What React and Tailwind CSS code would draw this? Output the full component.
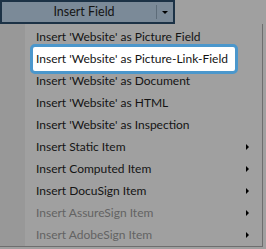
import React from 'react';

const items = [
  { label: "Insert 'Website' as Picture Field" },
  { label: "Insert 'Website' as Picture-Link-Field", active: true },
  { label: "Insert 'Website' as Document" },
  { label: "Insert 'Website' as HTML" },
  { label: "Insert 'Website' as Inspection" },
  { label: 'Insert Static Item', sub: true },
  { label: 'Insert Computed Item', sub: true },
  { label: 'Insert DocuSign Item', sub: true },
  { label: 'Insert AssureSign Item', sub: true, disabled: true },
  { label: 'Insert AdobeSign Item', sub: true, disabled: true },
];

export default function App() {
  return (
    <div className="w-[266px] h-[249px] bg-[#a0a0a0] overflow-hidden font-['Lato',sans-serif] text-[12px] text-[#141414]">
      {/* Split button */}
      <div className="flex h-[24px]">
        <div className="flex w-[175px] h-[24px] bg-[#7b8a98] border-2 border-[#1c3246]">
          <div className="flex-1 flex items-center justify-center pl-[10px] text-[12.5px]">Insert Field</div>
          <div className="w-px my-[3px] bg-[#5d6c79]" />
          <div className="w-[16px] flex items-center justify-center">
            <span className="block w-0 h-0 border-l-[3px] border-r-[3px] border-t-[3px] border-l-transparent border-r-transparent border-t-black" />
          </div>
        </div>
      </div>

      {/* Menu */}
      <div className="flex w-[263px] h-[223px] border-r border-b border-[#6e6e6e]">
        <div className="w-[25px] bg-[#989898]" />
        <div className="flex-1 pt-[2px] pr-[8px]">
          {items.map((it) =>
            it.active ? (
              <div key={it.label} className="relative z-10 flex items-center h-[30px] -my-[4px] ml-[5px] w-[208px] bg-white border-[3px] border-[#4b97cc] rounded-[5px] pl-[3px] whitespace-nowrap">
                {it.label}
              </div>
            ) : (
              <div key={it.label} className={`flex items-center h-[22px] pl-[11px] whitespace-nowrap ${it.disabled ? 'text-[#636363]' : ''}`}>
                <span className="flex-1">{it.label}</span>
                {it.sub && (
                  <span className="block w-0 h-0 mr-[5px] border-t-[3px] border-b-[3px] border-l-[3px] border-t-transparent border-b-transparent border-l-black" />
                )}
              </div>
            )
          )}
        </div>
      </div>
    </div>
  );
}
